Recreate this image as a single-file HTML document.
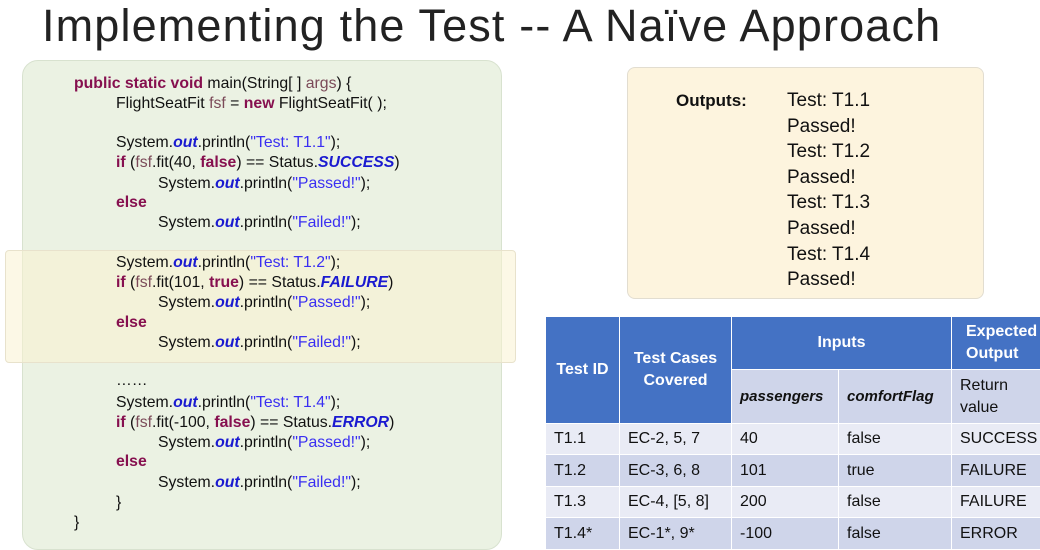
<!DOCTYPE html>
<html><head><meta charset="utf-8"><style>
body{margin:0;width:1040px;height:550px;background:#fff;position:relative;overflow:hidden;font-family:"Liberation Sans",sans-serif}
.t{position:absolute;left:42px;top:0;font-size:45px;color:#222;white-space:nowrap;letter-spacing:1.15px}
.code{position:absolute;left:22px;top:60px;width:478px;height:488px;background:#ebf2e3;border:1px solid #d8e2cf;border-radius:16px}
.hl{position:absolute;left:5px;top:250px;width:509px;height:111px;background:rgba(250,242,210,0.55);border:1px solid #e8e2cc;border-radius:4px}
.l{position:absolute;height:20px;line-height:20px;font-size:15.8px;color:#111;white-space:nowrap}
.k{color:#86104f;font-weight:bold}.v{color:#7b4a58}.s{color:#3a2ff2}.o{color:#1a1ad0;font-weight:bold;font-style:italic}
.out{position:absolute;left:627px;top:67px;width:355px;height:230px;background:#fdf4de;border:1px solid #e2ddd0;border-radius:8px}
.ol{position:absolute;left:787px;font-size:19px;line-height:25.6px;color:#111}
table{position:absolute;left:545px;top:316px;border-collapse:collapse;font-size:16px;table-layout:fixed;width:510px}
td{border:1px solid #fff;padding:0 0 0 8px;color:#111;white-space:nowrap;overflow:hidden}
th{border:1px solid #fff;background:#4472c4;color:#fff;font-weight:bold;font-size:16px;line-height:22px;white-space:nowrap}
.r1 td{background:#e9ebf5}.r2 td{background:#cfd5ea}
</style></head><body>
<div class="t">Implementing the Test -- A Naïve Approach</div>
<div class="code"></div>
<div class="hl"></div>
<div class="l" style="left:74px;top:74px"><span class="k">public static void</span> main(String[ ] <span class="v">args</span>) {</div>
<div class="l" style="left:116px;top:94px">FlightSeatFit <span class="v">fsf</span> = <span class="k">new</span> FlightSeatFit( );</div>
<div class="l" style="left:116px;top:133px">System.<span class="o">out</span>.println(<span class="s">"Test: T1.1"</span>);</div>
<div class="l" style="left:116px;top:153px"><span class="k">if</span> (<span class="v">fsf</span>.fit(40, <span class="k">false</span>) == Status.<span class="o">SUCCESS</span>)</div>
<div class="l" style="left:158px;top:174px">System.<span class="o">out</span>.println(<span class="s">"Passed!"</span>);</div>
<div class="l" style="left:116px;top:193px"><span class="k">else</span></div>
<div class="l" style="left:158px;top:213px">System.<span class="o">out</span>.println(<span class="s">"Failed!"</span>);</div>
<div class="l" style="left:116px;top:253px">System.<span class="o">out</span>.println(<span class="s">"Test: T1.2"</span>);</div>
<div class="l" style="left:116px;top:273px"><span class="k">if</span> (<span class="v">fsf</span>.fit(101, <span class="k">true</span>) == Status.<span class="o">FAILURE</span>)</div>
<div class="l" style="left:158px;top:293px">System.<span class="o">out</span>.println(<span class="s">"Passed!"</span>);</div>
<div class="l" style="left:116px;top:313px"><span class="k">else</span></div>
<div class="l" style="left:158px;top:333px">System.<span class="o">out</span>.println(<span class="s">"Failed!"</span>);</div>
<div class="l" style="left:116px;top:371px">……</div>
<div class="l" style="left:116px;top:393px">System.<span class="o">out</span>.println(<span class="s">"Test: T1.4"</span>);</div>
<div class="l" style="left:116px;top:413px"><span class="k">if</span> (<span class="v">fsf</span>.fit(-100, <span class="k">false</span>) == Status.<span class="o">ERROR</span>)</div>
<div class="l" style="left:158px;top:433px">System.<span class="o">out</span>.println(<span class="s">"Passed!"</span>);</div>
<div class="l" style="left:116px;top:452px"><span class="k">else</span></div>
<div class="l" style="left:158px;top:473px">System.<span class="o">out</span>.println(<span class="s">"Failed!"</span>);</div>
<div class="l" style="left:116px;top:493px">}</div>
<div class="l" style="left:74px;top:513px">}</div>
<div class="out"></div>
<div class="ol" style="left:676px;top:88px;font-weight:bold;font-size:17px">Outputs:</div>
<div class="ol" style="top:88px">Test: T1.1<br>Passed!<br>Test: T1.2<br>Passed!<br>Test: T1.3<br>Passed!<br>Test: T1.4<br>Passed!</div>
<table>
<colgroup><col style="width:74px"><col style="width:112px"><col style="width:107px"><col style="width:113px"><col style="width:104px"></colgroup>
<tr style="height:53px"><th rowspan="2">Test ID</th><th rowspan="2">Test Cases<br>Covered</th><th colspan="2">Inputs</th><th style="text-align:left;padding-left:14px">Expected<br>Output</th></tr>
<tr style="height:54px" class="r2"><td style="font-weight:bold;font-style:italic;font-size:15px">passengers</td><td style="font-weight:bold;font-style:italic;font-size:15px">comfortFlag</td><td style="line-height:22px">Return<br>value</td></tr>
<tr class="r1" style="height:31px"><td>T1.1</td><td>EC-2, 5, 7</td><td>40</td><td>false</td><td>SUCCESS</td></tr>
<tr class="r2" style="height:32px"><td>T1.2</td><td>EC-3, 6, 8</td><td>101</td><td>true</td><td>FAILURE</td></tr>
<tr class="r1" style="height:31px"><td>T1.3</td><td>EC-4, [5, 8]</td><td>200</td><td>false</td><td>FAILURE</td></tr>
<tr class="r2" style="height:32px"><td>T1.4*</td><td>EC-1*, 9*</td><td>-100</td><td>false</td><td>ERROR</td></tr>
</table>
</body></html>
